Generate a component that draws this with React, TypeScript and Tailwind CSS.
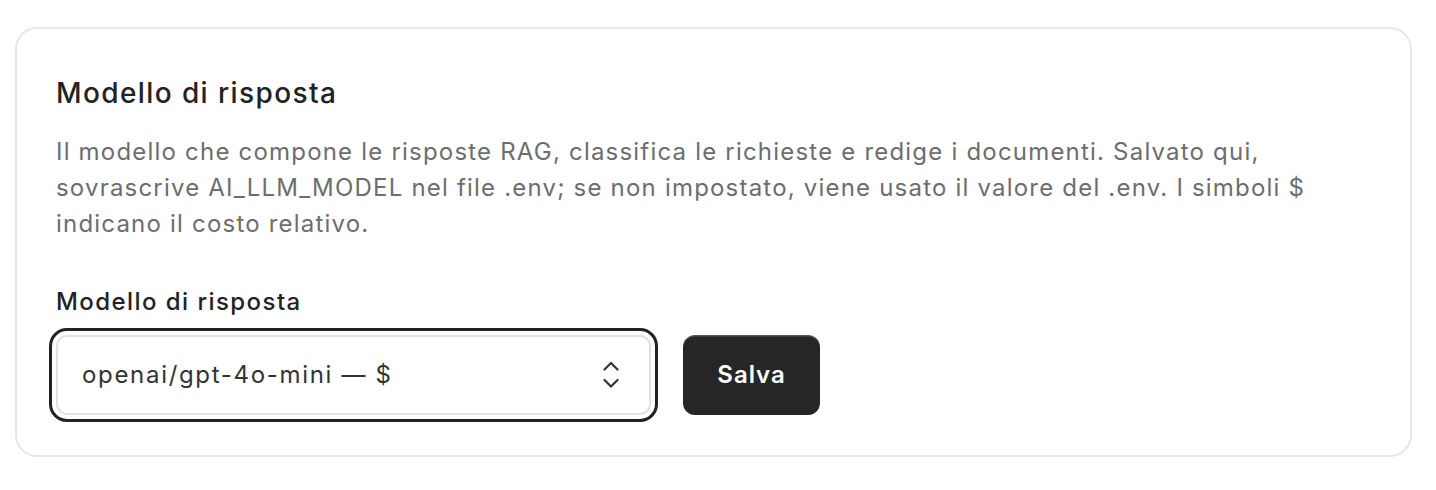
import React from "react";

export default function App() {
  return (
    <div className="w-[1436px] h-[490px] bg-white pt-[27px] pl-[15px] pr-[24px]" style={{ fontFamily: "Inter, 'Noto Sans', sans-serif" }}>
      <div className="rounded-[22px] border-2 border-[#e6e6e6] bg-white pl-[39px] pr-[39px] pt-[46px] pb-[40px]">
        <h2 className="text-[28px] leading-[36px] font-medium text-[#222] tracking-[0.05em]">Modello di risposta</h2>
        <p className="mt-[23px] text-[24px] leading-[36px] text-[#6d6d6d] tracking-[0.05em]">
          Il modello che compone le risposte RAG, classifica le richieste e redige i documenti. Salvato qui, sovrascrive AI_LLM_MODEL nel file .env; se non impostato, viene usato il valore del .env. I simboli $ indicano il costo relativo.
        </p>
        <label className="mt-[45px] block text-[24px] leading-[30px] font-medium text-[#222] tracking-[0.06em]">Modello di risposta</label>
        <div className="mt-[18px] flex items-center gap-[32px]">
          <div className="flex h-[80px] w-[595px] items-center justify-between rounded-[11px] border-2 border-[#e2e2e2] bg-white pl-[24px] pr-[30px] outline-[3px] outline-solid outline-[#222] outline-offset-[4px]">
            <span className="text-[24px] text-[#333] tracking-[0.07em]">openai/gpt-4o-mini — $</span>
            <svg width="16" height="28" viewBox="0 0 16 28" fill="none" stroke="#333" strokeWidth="2.2" strokeLinecap="round" strokeLinejoin="round">
              <path d="M1.5 8.5 L8 2 L14.5 8.5" />
              <path d="M1.5 19 L8 25.5 L14.5 19" />
            </svg>
          </div>
          <button className="h-[80px] w-[137px] rounded-[12px] bg-[#262626] text-[24px] font-semibold text-white tracking-[0.04em] shadow-[inset_0_1.5px_0_rgba(255,255,255,0.22)]">Salva</button>
        </div>
      </div>
    </div>
  );
}
